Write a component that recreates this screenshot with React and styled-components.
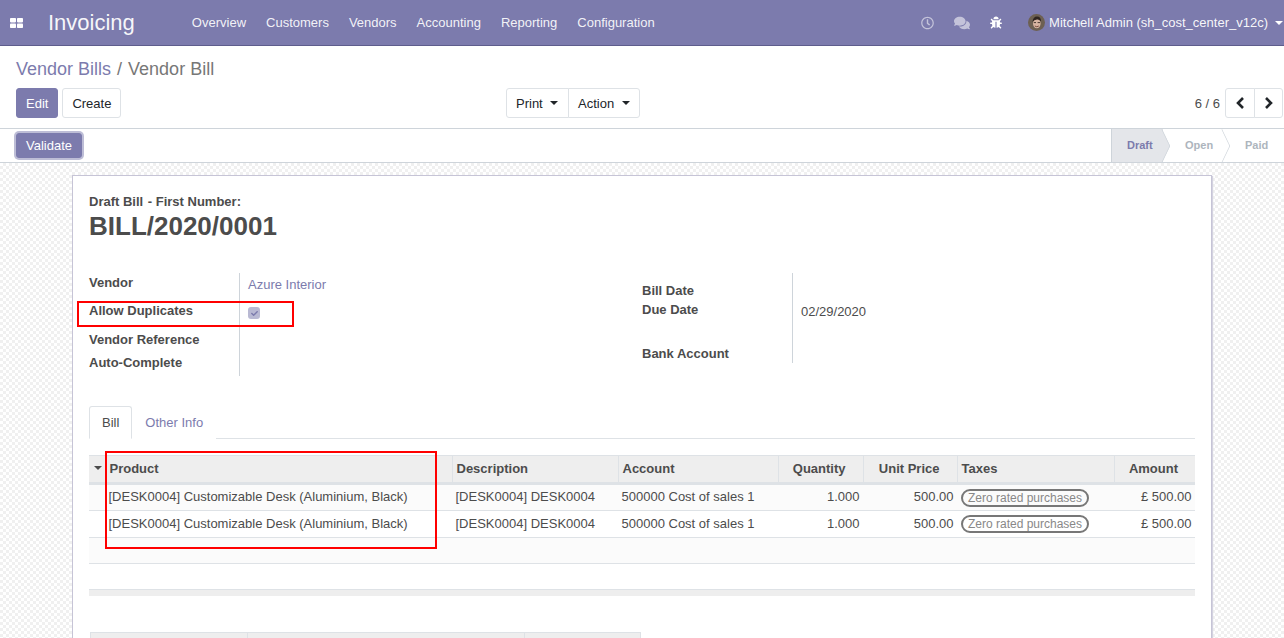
import React from 'react';
import styled, { createGlobalStyle } from 'styled-components';
import { FaRegClock, FaComments, FaBug, FaCheck } from 'react-icons/fa';

const purple = '#7c7bad';

const GlobalStyle = createGlobalStyle`
  html, body { margin: 0; padding: 0; height: 100%; overflow: hidden; }
  body {
    font-family: "Liberation Sans", Arial, sans-serif;
    font-size: 13px;
    line-height: 1.5;
    color: #4c4c4c;
    background: #fff;
  }
  * { box-sizing: border-box; }
`;

const Page = styled.div`
  position: relative;
  width: 1284px;
  height: 638px;
  overflow: hidden;
  display: flex;
  flex-direction: column;
`;

const Navbar = styled.header`
  flex: none;
  height: 46px;
  background: ${purple};
  border-bottom: 1px solid #5e5d8c;
  display: flex;
  align-items: center;
  color: #fff;
`;

const AppsIcon = styled.svg`
  width: 13px;
  height: 10px;
  margin: 0 25px 0 10px;
  fill: #fff;
`;

const Brand = styled.div`
  font-size: 22px;
  line-height: 1;
  margin-right: 57px;
  color: rgba(255, 255, 255, 0.95);
`;

const NavMenu = styled.nav`
  display: flex;
  gap: 20px;
  flex: 1;
`;

const NavItem = styled.span`
  color: rgba(255, 255, 255, 0.92);
`;

const Systray = styled.div`
  display: flex;
  align-items: center;
`;

const TrayIcon = styled.span`
  display: flex;
  width: ${p => p.$w}px;
  margin-left: ${p => p.$gap || 0}px;
  justify-content: center;
  font-size: ${p => p.$size}px;
  color: ${p => p.$dim ? 'rgba(255,255,255,0.55)' : '#fff'};
`;

const Avatar = styled.svg`
  width: 17px;
  height: 17px;
  margin: 0 4px 0 26px;
`;

const UserName = styled.span`
  color: rgba(255, 255, 255, 0.95);
`;

const Caret = styled.span`
  display: inline-block;
  width: 0;
  height: 0;
  border-top: 4px solid currentColor;
  border-left: 4px solid transparent;
  border-right: 4px solid transparent;
  margin-left: ${p => p.$gap ?? 8}px;
  vertical-align: 3px;
`;

const UserCaret = styled(Caret)`
  color: #fff;
  margin-right: 1px;
`;

const ControlPanel = styled.section`
  flex: none;
  height: 83px;
  padding: 11px 0 0 16px;
  border-bottom: 1px solid #ced4da;
`;

const Breadcrumb = styled.div`
  font-size: 18px;
  line-height: 25px;
  height: 31px;
  color: #777;
`;

const CrumbLink = styled.span`
  color: ${purple};
`;

const CrumbSep = styled.span`
  margin: 0 6px;
`;

const ControlRow = styled.div`
  display: flex;
  align-items: center;
`;

const LeftButtons = styled.div`
  display: flex;
  gap: 4px;
  width: 490px;
`;

const Button = styled.button`
  height: 30px;
  padding: 1px ${p => p.$pad || 9}px 0;
  font: inherit;
  border-radius: 3px;
  border: 1px solid ${p => p.$primary ? purple : '#dee2e6'};
  background: ${p => p.$primary ? purple : '#fff'};
  color: ${p => p.$primary ? '#fff' : '#212529'};
`;

const ButtonGroup = styled.div`
  display: flex;
`;

const GroupButton = styled(Button)`
  border-radius: 0;
  margin-left: -1px;
  width: ${p => p.$w}px;
  padding: 1px 0 0 9px;
  text-align: left;
  &:first-child { border-radius: 3px 0 0 3px; margin-left: 0; }
  &:last-child { border-radius: 0 3px 3px 0; }
`;

const PagerWrap = styled.div`
  margin-left: auto;
  display: flex;
  align-items: center;
  gap: 5px;
  padding-right: 1px;
  padding-top: 1px;
`;

const PagerText = styled.span`
  color: #4c4c4c;
`;

const PagerButton = styled(GroupButton)`
  display: flex;
  align-items: center;
  justify-content: center;
  padding: 0;
  margin-top: -1px;
  &:first-child { padding: 0; }
`;

const Chevron = styled.svg`
  width: 9px;
  height: 12px;
  fill: none;
  stroke: #212529;
  stroke-width: 2.6;
`;

const StatusBar = styled.section`
  flex: none;
  height: 34px;
  border-bottom: 1px solid #ced4da;
  display: flex;
  justify-content: space-between;
  padding-left: 16px;
`;

const ValidateButton = styled.button`
  height: 25px;
  width: 66px;
  margin-top: 4px;
  padding: 0;
  font: inherit;
  color: #fff;
  background: ${purple};
  border: 1px solid ${purple};
  border-radius: 3px;
  box-shadow: 0 0 0 2px rgba(124, 123, 173, 0.5);
`;

const Steps = styled.div`
  display: flex;
  overflow: hidden;
`;

const Step = styled.div`
  position: relative;
  width: ${p => p.$w}px;
  padding-left: ${p => p.$pl}px;
  font-size: 11px;
  font-weight: bold;
  line-height: 33px;
  color: ${p => p.$active ? purple : '#adb5bd'};
  background: ${p => p.$active ? '#e4e6ea' : '#fff'};
  border-left: ${p => p.$active ? '1px solid #ced4da' : '0'};

  &::after {
    content: '';
    position: absolute;
    top: 5px;
    right: -11px;
    width: 23px;
    height: 23px;
    transform: scaleX(0.48) rotate(45deg);
    background: ${p => p.$active ? '#e4e6ea' : '#fff'};
    border-top: 1px solid #ced4da;
    border-right: 1px solid #ced4da;
    z-index: 1;
    display: ${p => p.$last ? 'none' : 'block'};
  }
`;

const Background = styled.main`
  flex: 1;
  min-height: 0;
  padding: 12px 72px 0;
  overflow: hidden;
  background-color: #fff;
  background-image: repeating-conic-gradient(#f0f0f0 0 25%, #fff 0 50%);
  background-size: 6px 6px;
`;

const Sheet = styled.article`
  width: 1140px;
  height: 600px;
  background: #fff;
  border: 1px solid #c6c4d6;
  box-shadow: 1px 1px 1px #d4d3e0;
  padding: 17px 16px 0;
`;

const TitleLabel = styled.div`
  font-weight: bold;
  line-height: 18px;
`;

const TitleDash = styled.span`
  margin-left: 1px;
`;

const Title = styled.h1`
  margin: 0;
  font-size: 26px;
  line-height: 31px;
  font-weight: bold;
  color: #4c4c4c;
`;

const Groups = styled.div`
  display: grid;
  grid-template-columns: 553px 1fr;
  margin-top: 31px;
  height: 133px;
`;

const FieldGroup = styled.div`
  display: grid;
  grid-template-columns: 151px 1fr;
  align-self: start;
  height: ${p => p.$h}px;
`;

const Labels = styled.div`
  border-right: 1px solid #ced4da;
  height: 100%;
`;

const Label = styled.div`
  font-weight: bold;
  line-height: 20px;
  height: ${p => p.$h}px;
  padding-top: ${p => p.$top || 0}px;
`;

const Values = styled.div`
  padding-left: 8px;
`;

const Value = styled.div`
  line-height: 20px;
  height: ${p => p.$h}px;
  padding-top: ${p => p.$top || 0}px;
  color: ${p => p.$link ? purple : '#4c4c4c'};
`;

const CheckBox = styled.span`
  display: flex;
  align-items: center;
  justify-content: center;
  width: 12px;
  height: 12px;
  margin-top: 6px;
  border-radius: 3px;
  background: #b9b9d3;
  color: ${purple};
  font-size: 7px;
`;

const Tabs = styled.div`
  display: flex;
  height: 33px;
  border-bottom: 1px solid #dee2e6;
`;

const Tab = styled.div`
  height: 33px;
  padding: 0 12px;
  line-height: 32px;
  color: ${p => p.$active ? '#4c4c4c' : purple};
  background: #fff;
  border: 1px solid ${p => p.$active ? '#dee2e6' : 'transparent'};
  border-bottom-color: ${p => p.$active ? '#fff' : 'transparent'};
  border-radius: 3px 3px 0 0;
`;

const LinesTable = styled.table`
  margin-top: 16px;
  width: 1106px;
  table-layout: fixed;
  border-collapse: collapse;
`;

const HeadCell = styled.th`
  height: 28px;
  padding: 0 ${p => p.$right ? 17 : 4}px 0 4px;
  background: #eee;
  font-weight: bold;
  text-align: ${p => p.$right ? 'right' : 'left'};
  border-top: 1px solid #dee2e6;
  border-bottom: 3px solid #dee2e6;
  border-left: 1px solid ${p => p.$first ? '#eee' : '#dee2e6'};
  white-space: nowrap;

  &:first-child { border-left: 0; padding: 0 0 0 5px; }
`;

const Row = styled.tr`
  background: ${p => p.$shade ? '#fbfbfb' : '#fff'};
`;

const Cell = styled.td`
  height: ${p => p.$h || 27}px;
  padding: 0 3.5px 1px;
  text-align: ${p => p.$right ? 'right' : 'left'};
  border-bottom: 1px solid #dee2e6;
  white-space: nowrap;
  overflow: hidden;
`;

const FootCell = styled.td`
  height: 6px;
  padding: 0;
  background: #eee;
  border-top: 1px solid #dee2e6;
`;

const TaxPill = styled.span`
  display: inline-block;
  height: 18px;
  width: 128px;
  margin-left: 0.5px;
  border: 2px solid #777;
  border-radius: 9px;
  font-size: 12px;
  line-height: 14px;
  text-align: center;
  color: #888;
  vertical-align: middle;
`;

const TotalsHead = styled.div`
  display: grid;
  grid-template-columns: 156px 277px 1fr;
  width: 551px;
  height: 30px;
  margin: 36px 0 0 1px;
  background: #eee;
  border: 1px solid #dee2e6;
`;

const TotalsCol = styled.div`
  & + & { border-left: 1px solid #dee2e6; }
`;

// red marks drawn over the screenshot
const Mark = styled.div`
  position: absolute;
  left: ${p => p.$x}px;
  top: ${p => p.$y}px;
  width: ${p => p.$w}px;
  height: ${p => p.$h}px;
  border: 2px solid #f00;
  pointer-events: none;
`;

const menu = ['Overview', 'Customers', 'Vendors', 'Accounting', 'Reporting', 'Configuration'];
const widths = [16, 347, 166, 160, 85, 94, 157, 81];

const App = () => {
  return (
    <Page>
      <GlobalStyle />
      <Navbar>
        <AppsIcon viewBox="0 0 13 10">
          <rect x="0" y="0" width="6" height="4.4" rx="0.8" />
          <rect x="7" y="0" width="6" height="4.4" rx="0.8" />
          <rect x="0" y="5.4" width="6" height="4.6" rx="0.8" />
          <rect x="7" y="5.4" width="6" height="4.6" rx="0.8" />
        </AppsIcon>
        <Brand>Invoicing</Brand>
        <NavMenu>
          {menu.map(m => <NavItem key={m}>{m}</NavItem>)}
        </NavMenu>
        <Systray>
          <TrayIcon $w={13} $size={14} $dim><FaRegClock /></TrayIcon>
          <TrayIcon $w={16} $size={16} $gap={20} $dim><FaComments /></TrayIcon>
          <TrayIcon $w={12} $size={13} $gap={20}><FaBug /></TrayIcon>
          <Avatar viewBox="0 0 17 17">
            <circle cx="8.5" cy="8.5" r="8.5" fill="#6d6052" />
            <ellipse cx="8.8" cy="9.5" rx="3.8" ry="4.8" fill="#d8b5a2" />
            <path d="M4.5 8 Q5 2.5 9 2.5 Q13 2.5 13 7.5 Q11 5 9 5.5 Q6 5.5 4.5 8Z" fill="#2f2520" />
            <path d="M5.8 8.6 H8 M9.6 8.6 H12" stroke="#4a3a32" strokeWidth="1" />
            <path d="M6.8 12 Q8.8 13.5 10.8 12" stroke="#7a4d40" strokeWidth="1" fill="none" />
          </Avatar>
          <UserName>Mitchell Admin (sh_cost_center_v12c)</UserName>
          <UserCaret $gap={7} />
        </Systray>
      </Navbar>

      <ControlPanel>
        <Breadcrumb>
          <CrumbLink>Vendor Bills</CrumbLink>
          <CrumbSep>/</CrumbSep>
          Vendor Bill
        </Breadcrumb>
        <ControlRow>
          <LeftButtons>
            <Button $primary $pad={9}>Edit</Button>
            <Button $pad={9}>Create</Button>
          </LeftButtons>
          <ButtonGroup>
            <GroupButton $w={63}>Print<Caret $gap={7} /></GroupButton>
            <GroupButton $w={72}>Action<Caret $gap={8} /></GroupButton>
          </ButtonGroup>
          <PagerWrap>
            <PagerText>6 / 6</PagerText>
            <ButtonGroup>
              <PagerButton $w={30}>
                <Chevron viewBox="0 0 9 12"><polyline points="7,1 2,6 7,11" /></Chevron>
              </PagerButton>
              <PagerButton $w={29}>
                <Chevron viewBox="0 0 9 12"><polyline points="2,1 7,6 2,11" /></Chevron>
              </PagerButton>
            </ButtonGroup>
          </PagerWrap>
        </ControlRow>
      </ControlPanel>

      <StatusBar>
        <ValidateButton>Validate</ValidateButton>
        <Steps>
          <Step $active $w={52} $pl={15}>Draft</Step>
          <Step $w={60} $pl={22}>Open</Step>
          <Step $w={61} $pl={22} $last>Paid</Step>
        </Steps>
      </StatusBar>

      <Background>
        <Sheet>
          <TitleLabel>Draft Bill <TitleDash>- First Number:</TitleDash></TitleLabel>
          <Title>BILL/2020/0001</Title>
          <Groups>
            <FieldGroup $h={103}>
              <Labels>
                <Label $h={28}>Vendor</Label>
                <Label $h={29}>Allow Duplicates</Label>
                <Label $h={23}>Vendor Reference</Label>
                <Label $h={23}>Auto-Complete</Label>
              </Labels>
              <Values>
                <Value $link $h={28} $top={2}>Azure Interior</Value>
                <Value $h={29}><CheckBox><FaCheck /></CheckBox></Value>
              </Values>
            </FieldGroup>
            <FieldGroup $h={90}>
              <Labels>
                <Label $h={27} $top={8}>Bill Date</Label>
                <Label $h={29} $top={0}>Due Date</Label>
                <Label $h={34} $top={15}>Bank Account</Label>
              </Labels>
              <Values>
                <Value $h={27} />
                <Value $h={29} $top={2}>02/29/2020</Value>
              </Values>
            </FieldGroup>
          </Groups>
          <Tabs>
            <Tab $active>Bill</Tab>
            <Tab>Other Info</Tab>
          </Tabs>
          <LinesTable>
            <colgroup>
              {widths.map((w, i) => <col key={i} width={w} />)}
            </colgroup>
            <thead>
              <tr>
                <HeadCell><Caret $gap={0} /></HeadCell>
                <HeadCell $first>Product</HeadCell>
                <HeadCell>Description</HeadCell>
                <HeadCell>Account</HeadCell>
                <HeadCell $right>Quantity</HeadCell>
                <HeadCell $right>Unit Price</HeadCell>
                <HeadCell>Taxes</HeadCell>
                <HeadCell $right>Amount</HeadCell>
              </tr>
            </thead>
            <tbody>
              {[0, 1].map(i => (
                <Row key={i} $shade={i === 0}>
                  <Cell />
                  <Cell>[DESK0004] Customizable Desk (Aluminium, Black)</Cell>
                  <Cell>[DESK0004] DESK0004</Cell>
                  <Cell>500000 Cost of sales 1</Cell>
                  <Cell $right>1.000</Cell>
                  <Cell $right>500.00</Cell>
                  <Cell><TaxPill>Zero rated purchases</TaxPill></Cell>
                  <Cell $right>£ 500.00</Cell>
                </Row>
              ))}
              <Row $shade><Cell colSpan={8} $h={26} /></Row>
              <Row><Cell colSpan={8} $h={26} /></Row>
            </tbody>
            <tfoot>
              <tr><FootCell colSpan={8} /></tr>
            </tfoot>
          </LinesTable>
          <TotalsHead>
            <TotalsCol />
            <TotalsCol />
            <TotalsCol />
          </TotalsHead>
        </Sheet>
      </Background>

      <Mark $x={77} $y={301} $w={217} $h={26} />
      <Mark $x={105} $y={451} $w={332} $h={98} />
    </Page>
  );
};

export default App;
